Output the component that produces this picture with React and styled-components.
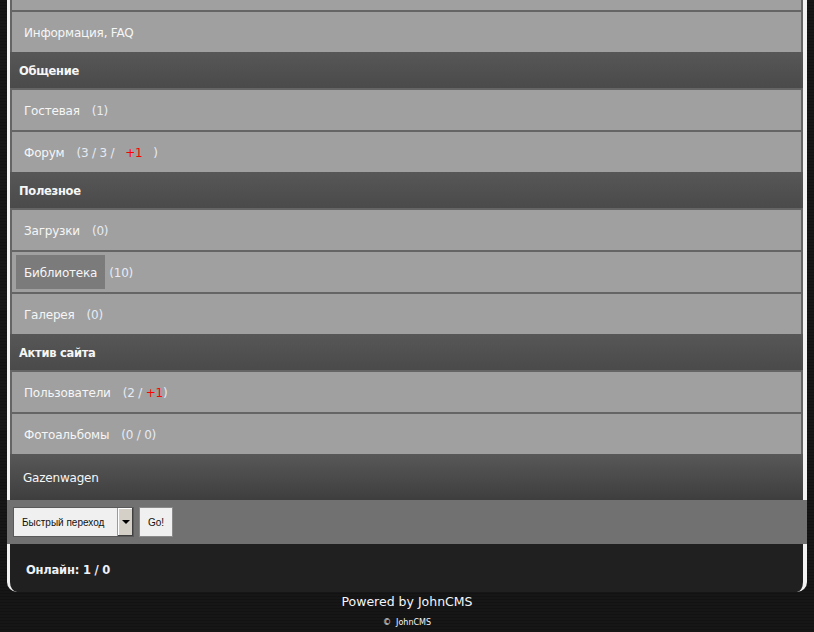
import React from "react";
import styled, { createGlobalStyle } from "styled-components";

const Global = createGlobalStyle`
  html, body { margin: 0; padding: 0; }
  body {
    background: repeating-linear-gradient(180deg, #161616 0px, #161616 2px, #121212 2px, #121212 3px);
    font-family: "DejaVu Sans", Verdana, sans-serif;
    font-size: 12px;
    color: #f4f4f4;
    overflow: hidden;
  }
`;

const Page = styled.div`
  width: 800px;
  margin: -32px auto 0;
`;

const Frame = styled.div`
  background: #656565;
  border-left: 3px solid #f2f2f2;
  border-right: 4px solid #f2f2f2;
  display: flex;
  flex-direction: column;
`;

const Item = styled.div`
  background: #a0a0a0;
  margin: 2px 2px 0;
  padding: 3px 4px;
  display: flex;
  align-items: center;
  height: 34px;
  letter-spacing: -0.2px;
`;

const Link = styled.span`
  display: inline-block;
  padding: 11px 8px 9px;
  line-height: 14px;
  color: #f6f6f6;
  background: ${(p) => (p.$active ? "#7b7b7b" : "transparent")};
`;

const Count = styled.span`
  color: #e6ebf4;
  margin-left: 4px;
  padding-top: 2px;
  white-space: pre;
`;

const Red = styled.span`
  color: #ff0000;
`;

const Header = styled.div`
  height: 36px;
  box-sizing: border-box;
  padding: 2px 0 0 9px;
  display: flex;
  align-items: center;
  font-weight: bold;
  font-size: 11.5px;
  letter-spacing: -0.3px;
  color: #f6f6f6;
  background: linear-gradient(180deg, #575757 0%, #4a4a4a 100%);
`;

const Gazen = styled.div`
  height: 46px;
  box-sizing: border-box;
  padding: 2px 0 0 13px;
  display: flex;
  align-items: center;
  letter-spacing: -0.2px;
  color: #f6f6f6;
  background: linear-gradient(180deg, #585858 0%, #3e3e3e 100%);
`;

const Bar = styled.form`
  margin: 0;
  height: 44px;
  background: #717171;
  display: flex;
  align-items: center;
  gap: 5px;
  padding-left: 6px;
`;

const Select = styled.div`
  width: 119px;
  height: 28px;
  background: #f0f0f0;
  border: 1px solid #5a5a5a;
  display: flex;
  align-items: stretch;
  font-family: "Liberation Sans", Arial, sans-serif;
  font-size: 10px;
  color: #111;
`;

const SelectText = styled.span`
  flex: 1;
  display: flex;
  align-items: center;
  padding-left: 8px;
`;

const Arrow = styled.span`
  width: 15px;
  background: #d4d0c8;
  border-left: 1px solid #9a9a9a;
  box-shadow: inset -1px -1px 0 #404040, inset 1px 1px 0 #ffffff;
  display: flex;
  align-items: center;
  justify-content: center;
  &::after {
    content: "";
    border-left: 4px solid transparent;
    border-right: 4px solid transparent;
    border-top: 4px solid #000;
  }
`;

const Go = styled.button`
  width: 34px;
  height: 30px;
  background: #f0f0f0;
  border: 1px solid #8a8a8a;
  font-family: "Liberation Sans", Arial, sans-serif;
  font-size: 10px;
  color: #111;
  padding: 0;
`;

const Footer = styled.div`
  height: 48px;
  background: #202020;
  border-left: 3px solid #f2f2f2;
  border-right: 4px solid #f2f2f2;
  border-bottom-left-radius: 10px;
  border-bottom-right-radius: 10px;
  display: flex;
  align-items: center;
  padding-left: 16px;
  padding-top: 3px;
  box-sizing: border-box;
  font-weight: bold;
  font-size: 11.5px;
  letter-spacing: -0.2px;
  color: #eef1f8;
`;

const Powered = styled.div`
  text-align: center;
  padding-top: 2px;
  font-size: 12.5px;
  line-height: 16px;
  color: #f4f6fa;
`;

const Copy = styled.div`
  text-align: center;
  font-size: 8px;
  line-height: 14px;
  padding-top: 6px;
  color: #f4f6fa;
`;

export default function App() {
  return (
    <>
      <Global />
      <Page>
        <Frame>
          <Item />
          <Item><Link>Информация, FAQ</Link></Item>
          <Header>Общение</Header>
          <Item><Link>Гостевая</Link><Count>(1)</Count></Item>
          <Item><Link>Форум</Link><Count>(3 / 3 /   <Red>+1</Red>   )</Count></Item>
          <Header>Полезное</Header>
          <Item><Link>Загрузки</Link><Count>(0)</Count></Item>
          <Item><Link $active>Библиотека</Link><Count>(10)</Count></Item>
          <Item><Link>Галерея</Link><Count>(0)</Count></Item>
          <Header>Актив сайта</Header>
          <Item><Link>Пользователи</Link><Count>(2 / <Red>+1</Red>)</Count></Item>
          <Item><Link>Фотоальбомы</Link><Count>(0 / 0)</Count></Item>
          <Gazen>Gazenwagen</Gazen>
        </Frame>
        <Bar onSubmit={(e) => e.preventDefault()}>
          <Select>
            <SelectText>Быстрый переход</SelectText>
            <Arrow />
          </Select>
          <Go type="button">Go!</Go>
        </Bar>
        <Footer>Онлайн: 1 / 0</Footer>
      </Page>
      <Powered>Powered by JohnCMS</Powered>
      <Copy>©&nbsp;&nbsp;JohnCMS</Copy>
    </>
  );
}
